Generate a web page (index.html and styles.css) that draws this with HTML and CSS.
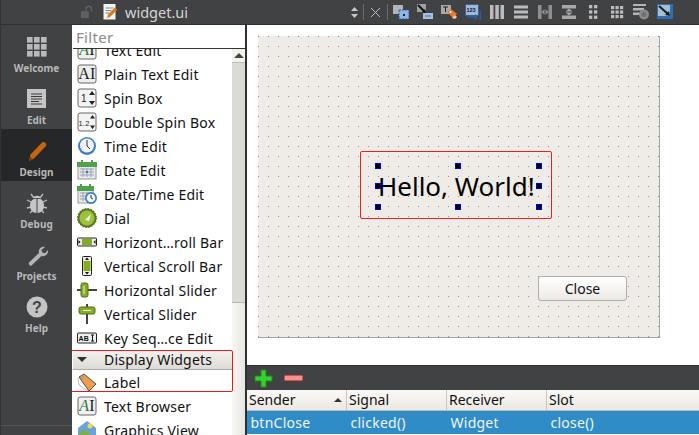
FILE: index.html
```html
<!DOCTYPE html>
<html lang="en">
<head>
<meta charset="utf-8">
<title>widget.ui</title>
<link rel="stylesheet" href="styles.css">
</head>
<body>
<div class="app">
  <nav class="modes">
    <div class="modes-top"></div>
    <div class="mode">
      <svg class="mode-icon" viewBox="0 0 24 24"><g fill="#b9b9b9"><rect x="2" y="2" width="5.6" height="5.6"/><rect x="9" y="2" width="5.6" height="5.6"/><rect x="16" y="2" width="5.6" height="5.6"/><rect x="2" y="9" width="5.6" height="5.6"/><rect x="9" y="9" width="5.6" height="5.6"/><rect x="16" y="9" width="5.6" height="5.6"/><rect x="2" y="16" width="5.6" height="5.6"/><rect x="9" y="16" width="5.6" height="5.6"/><rect x="16" y="16" width="5.6" height="5.6"/></g></svg>
      <span>Welcome</span>
    </div>
    <div class="mode">
      <svg class="mode-icon" viewBox="0 0 24 24"><rect x="2" y="2" width="19" height="19" fill="#c4c4c4"/><path d="M6 7h11M6 9.500h11M6 12h11M6 14.500h8M6 17h11" stroke="#3a3a3a" stroke-width="1"/></svg>
      <span>Edit</span>
    </div>
    <div class="mode active">
      <svg class="mode-icon" viewBox="0 0 24 24"><path d="M4 22l1.500-6.500L17 3.500c1-1 2.500-.5 3.500.5s1 2.300.2 3.200L9.500 19z" fill="#c7650f"/><path d="M4 22l1-4.500 3 3z" fill="#7a3e08"/></svg>
      <span>Design</span>
    </div>
    <div class="mode">
      <svg class="mode-icon" viewBox="0 0 24 24"><g stroke="#bdbdbd" stroke-width="1.300" fill="none"><path d="M6 3l3 4M18 3l-3 4M2 9l4 2M22 9l-4 2M2 17l4-1M22 17l-4-1M5 22l3-3M19 22l-3-3"/></g><path d="M12 8c-4-1-7 2-7 7 0 4 3 7 6.500 7V8zM12.500 8c4-1 6.500 2 6.500 7 0 4-3 7-6.500 7z" fill="#c6c6c6"/><path d="M8 7c1-3 7-3 8 0z" fill="#c6c6c6"/></svg>
      <span>Debug</span>
    </div>
    <div class="mode">
      <svg class="mode-icon" viewBox="0 0 24 24"><path d="M4 19.500L14 10c-1-3.500 2-7 6-6l-3.500 3 .8 2.600 2.600.7L23 7c.7 4-3 7-6.500 6L6.500 22.500c-1.500 1-3.500-1.500-2.500-3z" fill="#b5b5b5"/></svg>
      <span>Projects</span>
    </div>
    <div class="mode">
      <svg class="mode-icon" viewBox="0 0 24 24"><circle cx="12" cy="12" r="10.500" fill="#c4c4c4"/><text x="12" y="18" class="help-mark">?</text></svg>
      <span>Help</span>
    </div>
    <div class="modes-line"></div>
  </nav>

  <div class="workspace">
    <header class="topbar">
      <svg class="lock" viewBox="0 0 16 16"><rect x="1" y="7" width="9" height="8" fill="#5e6062"/><path d="M7 7V4.500a3 3 0 0 1 6 0V7" fill="none" stroke="#5e6062" stroke-width="1.600"/></svg>
      <svg class="doc" viewBox="0 0 16 18"><path d="M1.500 1h12v15.500h-12z" fill="#f3f3f0"/><path d="M3.500 5h8M3.500 7.500h6M3.500 10h4" stroke="#888" stroke-width="1"/><path d="M5 15l1-3.500L13 4.500l2.200 2.200L8 14z" fill="#d9791a"/></svg>
      <span class="filename">widget.ui</span>
      <div class="spacer"></div>
      <svg class="updown" viewBox="0 0 9 13"><path d="M4.500 1L8 5H1zM4.500 12L1 8h7z" fill="#c9c9c9"/></svg>
      <i class="sep"></i>
      <svg class="close-x" viewBox="0 0 11 11"><path d="M1 1l9 9M10 1l-9 9" stroke="#bdbdbd" stroke-width="1"/></svg>
      <i class="sep"></i>
      <div class="tools">
        <svg viewBox="0 0 16 16"><rect x="0" y="1" width="10" height="9" fill="#b4b4b4"/><rect x="6" y="6" width="10" height="9" fill="#8db6e6" stroke="#2c5a94" stroke-dasharray="2 1"/><rect x="10" y="10" width="2" height="2" fill="#123"/></svg>
        <svg viewBox="0 0 16 16"><rect x="0" y="0" width="9" height="8" fill="#a0a0a0"/><path d="M1 1l7 7" stroke="#111" stroke-width="2"/><path d="M9 9l-1-4-3 3z" fill="#111"/><rect x="6" y="9" width="10" height="6" fill="#a5c0e2"/><path d="M8 12h6" stroke="#4a6f9c"/></svg>
        <svg viewBox="0 0 16 16"><rect x="0" y="1" width="10" height="9" fill="#a8a8a8"/><path d="M2 3h5M4.500 3v5" stroke="#222"/><path d="M6 8l4-3 6 5-4 4z" fill="#e8792b"/><circle cx="9.500" cy="8" r="1" fill="#fff"/><path d="M11 14l3-3 2 2-2 2z" fill="#f2c9a8"/></svg>
        <svg viewBox="0 0 16 16"><rect x="0.500" y="0.500" width="13" height="11" fill="#9eb9dc" stroke="#3a5f90"/><text x="1.500" y="8" class="tool-num">123</text><path d="M2 13h10" stroke="#2b5f9f" stroke-width="1.600"/><path d="M10 10l3 3-3 3z" fill="#2b5f9f"/><path d="M15.300 7v9" stroke="#2b5f9f" stroke-width="1.400"/></svg>
        <svg viewBox="0 0 16 16"><g fill="#bcbcbc"><rect x="1" y="1" width="3.500" height="14"/><rect x="6.300" y="1" width="3.500" height="14"/><rect x="11.500" y="1" width="3.500" height="14"/></g></svg>
        <svg viewBox="0 0 16 16"><g fill="#bcbcbc"><rect x="1" y="1.500" width="14" height="3"/><rect x="1" y="6.500" width="14" height="3"/><rect x="1" y="11.500" width="14" height="3"/></g></svg>
        <svg viewBox="0 0 16 16"><g fill="#8f8f8f"><rect x="1" y="1" width="3.500" height="14"/><rect x="11.500" y="1" width="3.500" height="14"/><path d="M4.500 8l3-3v6zM11.500 8l-3-3v6z"/></g></svg>
        <svg viewBox="0 0 16 16"><g fill="#a8a8a8"><rect x="1" y="1" width="14" height="3.500"/><rect x="1" y="11.500" width="14" height="3.500"/><path d="M8 4.500l-3.500 3h7zM8 11.500l-3.500-3h7z"/></g></svg>
        <svg viewBox="0 0 16 16"><g fill="#bcbcbc"><rect x="4" y="1" width="3.300" height="3.300"/><rect x="9" y="1" width="3.300" height="3.300"/><rect x="4" y="6.300" width="3.300" height="3.300"/><rect x="9" y="6.300" width="3.300" height="3.300"/><rect x="4" y="11.600" width="3.300" height="3.300"/><rect x="9" y="11.600" width="3.300" height="3.300"/></g></svg>
        <svg viewBox="0 0 16 16"><g fill="#bcbcbc"><rect x="2" y="2" width="3.200" height="3.200"/><rect x="6.500" y="2" width="3.200" height="3.200"/><rect x="11" y="2" width="3.200" height="3.200"/><rect x="2" y="6.500" width="3.200" height="3.200"/><rect x="6.500" y="6.500" width="3.200" height="3.200"/><rect x="11" y="6.500" width="3.200" height="3.200"/><rect x="2" y="11" width="3.200" height="3.200"/><rect x="6.500" y="11" width="3.200" height="3.200"/><rect x="11" y="11" width="3.200" height="3.200"/></g></svg>
        <svg viewBox="0 0 16 16"><g fill="#b5b5b5"><rect x="0" y="0" width="13" height="2"/><rect x="0" y="4" width="11" height="2.500"/><rect x="0" y="8.500" width="7" height="2.500"/></g><circle cx="11" cy="10.500" r="5" fill="#8a8a8a"/><circle cx="11" cy="10.500" r="2.500" fill="#6e6e6e"/></svg>
        <svg viewBox="0 0 16 16"><rect x="0" y="0" width="16" height="15" fill="#2e6fb0"/><rect x="1" y="1" width="12" height="11" fill="#a9bdd0"/><path d="M2 2l9 8" stroke="#0b1c2c" stroke-width="2"/><path d="M13 12l-1-5-4 4z" fill="#0b1c2c"/></svg>
      </div>
    </header>

    <div class="content">
      <aside class="widgetbox">
        <div class="filter">Filter</div>
        <div class="list-wrap">
          <ul class="list">
            <li class="row"><svg viewBox="0 0 20 20"><rect x="1" y="1" width="18" height="18" rx="2" fill="#eee" stroke="#666"/><text x="10" y="15" class="ai"><tspan class="green">A</tspan>I</text></svg><span>Text Edit</span></li>
            <li class="row"><svg viewBox="0 0 20 20"><rect x="1" y="1" width="18" height="18" rx="2" fill="#eee" stroke="#666"/><text x="10" y="15" class="ai">AI</text></svg><span>Plain Text Edit</span></li>
            <li class="row"><svg viewBox="0 0 20 20"><rect x="1" y="1" width="18" height="18" rx="2" fill="#f3f3f3" stroke="#666"/><text x="7" y="14" class="spin">1</text><path d="M15 3l3 4h-6zM15 17l-3-4h6z" fill="#222"/></svg><span>Spin Box</span></li>
            <li class="row"><svg viewBox="0 0 20 20"><rect x="1" y="1" width="18" height="18" rx="2" fill="#f3f3f3" stroke="#666"/><text x="7" y="13.500" class="spin small">1.2</text><path d="M15.500 3l2.500 3.500h-5zM15.500 17l-2.500-3.500h5z" fill="#222"/></svg><span>Double Spin Box</span></li>
            <li class="row"><svg viewBox="0 0 20 20"><circle cx="10" cy="10" r="9" fill="#3e7fc4"/><circle cx="10" cy="9.500" r="7" fill="#f2f4f4"/><path d="M10 4v6l3 3" stroke="#333" stroke-width="1" fill="none"/></svg><span>Time Edit</span></li>
            <li class="row"><svg viewBox="0 0 20 20"><rect x="1" y="4" width="18" height="15" fill="#e8e8ea" stroke="#999"/><rect x="0" y="2" width="20" height="5" fill="#4ea24a"/><path d="M5 0v3M15 0v3" stroke="#4ea24a" stroke-width="2"/><path d="M3 9h14M3 12h14M3 15h14M6 8v9M10 8v9M14 8v9" stroke="#9ba4b5" stroke-width="1"/><rect x="9" y="11" width="2" height="2" fill="#3e6fc4"/></svg><span>Date Edit</span></li>
            <li class="row"><svg viewBox="0 0 20 20"><rect x="1" y="4" width="15" height="15" fill="#e8e8ea" stroke="#999"/><rect x="0" y="2" width="17" height="5" fill="#4ea24a"/><path d="M4 0v3M13 0v3" stroke="#4ea24a" stroke-width="2"/><path d="M3 9h12M3 12h12M3 15h8M6 8v9M10 8v9" stroke="#9ba4b5" stroke-width="1"/><circle cx="14" cy="14" r="6" fill="#3e7fc4"/><circle cx="14" cy="14" r="4.300" fill="#f2f4f4"/><path d="M14 11v3l2 1" stroke="#333" stroke-width="1" fill="none"/></svg><span>Date/Time Edit</span></li>
            <li class="row"><svg viewBox="0 0 20 20"><circle cx="10" cy="10" r="9.500" fill="#5d7a24" stroke="#3f5a14" stroke-dasharray="1.500 1.500"/><circle cx="10" cy="10" r="7.500" fill="#9cc23c"/><path d="M8 12l6-6-2 7z" fill="#f4f7e8"/></svg><span>Dial</span></li>
            <li class="row"><svg viewBox="0 0 20 20"><rect x="0.500" y="6" width="19" height="8" rx="1" fill="#eee" stroke="#222"/><rect x="5" y="7" width="10" height="6" fill="#83ad1d"/><path d="M3.500 10L1.500 8v4zM16.500 10l2-2v4z" fill="#111"/></svg><span>Horizont…roll Bar</span></li>
            <li class="row"><svg viewBox="0 0 20 20"><rect x="5.500" y="0.500" width="9" height="19" rx="1" fill="#eee" stroke="#222"/><rect x="6.500" y="5" width="7" height="10" fill="#83ad1d"/><path d="M10 1.500L8 4h4zM10 18.500L8 16h4z" fill="#111"/></svg><span>Vertical Scroll Bar</span></li>
            <li class="row"><svg viewBox="0 0 20 20"><path d="M0 10h20" stroke="#444" stroke-width="2"/><rect x="4" y="3" width="7" height="14" rx="2" fill="#86ad24" stroke="#4f6c12"/><path d="M7 6v8" stroke="#eef4d4" stroke-width="1"/></svg><span>Horizontal Slider</span></li>
            <li class="row"><svg viewBox="0 0 20 20"><path d="M10 0v20" stroke="#444" stroke-width="2"/><rect x="2" y="3" width="16" height="7" rx="2" fill="#86ad24" stroke="#4f6c12"/><path d="M6 6.500h8" stroke="#eef4d4" stroke-width="1"/></svg><span>Vertical Slider</span></li>
            <li class="row"><svg viewBox="0 0 20 20"><rect x="0.500" y="5" width="19" height="10" rx="1" fill="#eee" stroke="#222"/><text x="1.500" y="13" class="keyseq">AB</text><path d="M14 7h3M15.500 7v6M14 13h3" stroke="#111" stroke-width="1"/></svg><span>Key Seq…ce Edit</span></li>
            <li class="header"><i class="triangle"></i><span>Display Widgets</span></li>
            <li class="row"><svg viewBox="0 0 20 20"><path d="M1 6l1 7 9 6" fill="none" stroke="#bbb"/><path d="M2 5l5-3 12 10-7 7z" fill="#f29b4c" stroke="#5d5142"/><circle cx="5" cy="5" r="1.200" fill="#fff" stroke="#777"/></svg><span>Label</span></li>
            <li class="row"><svg viewBox="0 0 20 20"><rect x="1" y="1" width="18" height="18" rx="2" fill="#f0f0f0" stroke="#666"/><text x="10" y="15" class="ai"><tspan class="green">A</tspan>I</text></svg><span>Text Browser</span></li>
            <li class="row"><svg viewBox="0 0 20 20"><path d="M1 8l9-7 9 7v11H1z" fill="#6aa3d8"/><path d="M2 15l5-6 5 5 6 3v2H2z" fill="#7eb13b"/><circle cx="13" cy="6" r="2.500" fill="#f3d94c"/></svg><span>Graphics View</span></li>
          </ul>
          <div class="scrollbar">
            <div class="scroll-btn"><i></i></div>
            <div class="scroll-thumb"></div>
          </div>
          <div class="marker"></div>
        </div>
      </aside>

      <main class="editor">
        <section class="canvas">
          <div class="form">
            <div class="hello">Hello, World!</div>
            <i class="hd left top"></i>
            <i class="hd mid top"></i>
            <i class="hd right top"></i>
            <i class="hd left center"></i>
            <i class="hd right center"></i>
            <i class="hd left bottom"></i>
            <i class="hd mid bottom"></i>
            <i class="hd right bottom"></i>
            <div class="marker-label"></div>
            <div class="close-btn">Close</div>
          </div>
        </section>
        <section class="signals">
          <div class="sig-tools">
            <svg class="plus" viewBox="0 0 19 19"><path d="M7 1h5v6h6v5h-6v6H7v-6H1V7h6z" fill="#35d02d" stroke="#1b8c18" stroke-width="1"/></svg>
            <svg class="minus" viewBox="0 0 19 7"><rect x="0.500" y="0.500" width="18" height="5" rx="1" fill="#f29292" stroke="#d84c4c"/></svg>
          </div>
          <div class="sig-head">
            <div class="cell">Sender<i class="sort"></i></div>
            <div class="cell">Signal</div>
            <div class="cell">Receiver</div>
            <div class="cell last">Slot</div>
          </div>
          <div class="sig-row">
            <div class="cell">btnClose</div>
            <div class="cell">clicked()</div>
            <div class="cell">Widget</div>
            <div class="cell last">close()</div>
          </div>
        </section>
      </main>
    </div>
  </div>
</div>
</body>
</html>
```
FILE: styles.css
```css
* { box-sizing: border-box; }
html, body { margin: 0; padding: 0; }
body { font-family: "Noto Sans", "Open Sans", sans-serif; background: #fff; color: #111; }
.app { display: flex; width: 699px; height: 435px; overflow: hidden; }

.modes { position: relative; width: 72px; flex: none; background: #404244; border-left: 1px solid #3a3036; display: flex; flex-direction: column; align-items: stretch; }
.modes-top { height: 25px; border-bottom: 1px solid #2e2f30; flex: none; }
.mode { height: 52px; flex: none; padding-top: 10px; display: flex; flex-direction: column; align-items: center; color: #b8b8b8; font-size: 10px; font-weight: 700; line-height: 14px; }
.mode.active { background: #262728; }
.mode-icon { width: 24px; height: 24px; margin-bottom: 2px; display: block; }
.help-mark { font: 700 16px "Liberation Sans", sans-serif; fill: #404244; text-anchor: middle; }
.modes-line { position: absolute; left: 0; right: 0; top: 425px; height: 1px; background: #555; }

.workspace { flex: 1; min-width: 0; display: flex; flex-direction: column; }
.topbar { height: 25px; flex: none; background: #404244; border-bottom: 1px solid #2e2f30; display: flex; align-items: center; padding: 0 26px 0 8px; }
.lock { width: 14px; height: 14px; margin-right: 8px; flex: none; }
.doc { width: 16px; height: 18px; margin-right: 7px; flex: none; }
.filename { color: #d6d6d6; font-size: 14.5px; }
.spacer { flex: 1; }
.updown { width: 9px; height: 13px; flex: none; margin-right: 4px; }
.sep { width: 1px; height: 16px; background: #6a6c6e; flex: none; }
.close-x { width: 11px; height: 11px; flex: none; margin: 0 6px 0 6px; }
.tools { display: flex; gap: 8px; margin-left: 5px; }
.tools svg { width: 16px; height: 16px; display: block; flex: none; }
.tool-num { font: 700 5.500px "Liberation Sans", sans-serif; fill: #123; }

.content { flex: 1; display: flex; min-height: 0; }
.widgetbox { width: 175px; flex: none; border-right: 2px solid #2f2f2f; display: flex; flex-direction: column; background: #fff; }
.filter { height: 24px; flex: none; margin-left: 1px; border-bottom: 1px solid #333; color: #8a8a8a; font-size: 15px; line-height: 24px; padding-left: 3px; background: #fff; letter-spacing: .3px; }
.list-wrap { position: relative; flex: 1; min-height: 0; display: flex; overflow: hidden; }
.list { list-style: none; margin: -11px 0 0 0; padding: 0; flex: 1; min-width: 0; }
.row { height: 24px; display: flex; align-items: center; padding-left: 5px; font-size: 14px; letter-spacing: .22px; white-space: nowrap; color: #111; }
.row svg { width: 20px; height: 20px; flex: none; margin-right: 7px; display: block; }
.header { height: 20px; display: flex; align-items: center; margin-left: 1px; padding-left: 4px; background: linear-gradient(#f4f2ef, #dedbd6); border-bottom: 1px solid #a9a9a9; font-size: 14px; letter-spacing: .22px; white-space: nowrap; }
.triangle { width: 0; height: 0; border-left: 5px solid transparent; border-right: 5px solid transparent; border-top: 5px solid #333; margin-right: 17px; }
.ai { font: 16px "Liberation Serif", serif; fill: #222; text-anchor: middle; }
.green { fill: #2c7a3a; font-style: italic; }
.spin { font: 10px "Liberation Sans", sans-serif; fill: #222; text-anchor: middle; }
.spin.small { font-size: 7.500px; }
.keyseq { font: 700 7px "Liberation Sans", sans-serif; fill: #111; }

.scrollbar { width: 13px; flex: none; background: linear-gradient(90deg, #f7f6f3, #e8e6e2); display: flex; flex-direction: column; }
.scroll-btn { height: 14px; flex: none; display: flex; align-items: center; justify-content: center; background: #f3f1ee; border-bottom: 1px solid #bdbbb6; }
.scroll-btn i { width: 0; height: 0; border-left: 5px solid transparent; border-right: 5px solid transparent; border-bottom: 5px solid #444; }
.scroll-thumb { height: 240px; background: #dcdad5; border-bottom: 1px solid #b8b6b1; flex: none; }
.marker { position: absolute; left: -3px; top: 301px; width: 164px; height: 42px; border: 1px solid #e8191c; border-radius: 2px; pointer-events: none; }

.editor { flex: 1; min-width: 0; display: flex; flex-direction: column; }
.canvas { height: 340px; flex: none; padding: 11px 0 0 11px; background: #fff; }
.form { position: relative; width: 402px; height: 302px; background-color: #efebe7; background-image: radial-gradient(circle at .5px .5px, #949494 .6px, transparent .7px); background-size: 10px 10px; border-right: 1px solid #a5a5a5; border-bottom: 1px solid #a5a5a5; }
.hello { position: absolute; left: 120px; top: 130px; width: 170px; height: 40px; font-size: 26px; line-height: 40px; color: #000; white-space: nowrap; }
.hd { position: absolute; width: 6px; height: 6px; background: #000; border: 1px solid #0000e0; }
.hd.left { left: 117px; }
.hd.mid { left: 197px; }
.hd.right { left: 278px; }
.hd.top { top: 127px; }
.hd.center { top: 147px; }
.hd.bottom { top: 168px; }
.marker-label { position: absolute; left: 102px; top: 115px; width: 192px; height: 68px; border: 1px solid #f01e1e; border-radius: 2px; }
.close-btn { position: absolute; left: 280px; top: 240px; width: 89px; height: 25px; border: 1px solid #b0aeaa; border-radius: 3px; background: linear-gradient(#fff, #ece9e5); text-align: center; font-size: 14px; line-height: 23px; }

.signals { flex: 1; min-height: 0; display: flex; flex-direction: column; }
.sig-tools { height: 25px; flex: none; background: #404244; border-top: 1px solid #2e2f30; display: flex; align-items: center; padding-left: 7px; }
.plus { width: 19px; height: 19px; display: block; margin-right: 11px; }
.minus { width: 19px; height: 7px; display: block; }
.sig-head, .sig-row { display: flex; flex: none; }
.sig-head { height: 21px; background: linear-gradient(#fbf9f7, #ebe8e3); border-bottom: 1px solid #bdbbb6; font-size: 14px; line-height: 20px; }
.sig-head .cell { position: relative; border-right: 1px solid #c9c6c1; padding-left: 2px; }
.cell { width: 100px; flex: none; white-space: nowrap; }
.cell.last { flex: 1; border-right: 0; }
.sort { position: absolute; left: 87px; top: 8px; width: 0; height: 0; border-left: 4px solid transparent; border-right: 4px solid transparent; border-bottom: 4px solid #333; }
.sig-row { height: 23px; background: #308cc6; color: #f0f5f8; font-size: 14px; letter-spacing: .25px; line-height: 23px; }
.sig-row .cell { padding-left: 3.500px; }
```
